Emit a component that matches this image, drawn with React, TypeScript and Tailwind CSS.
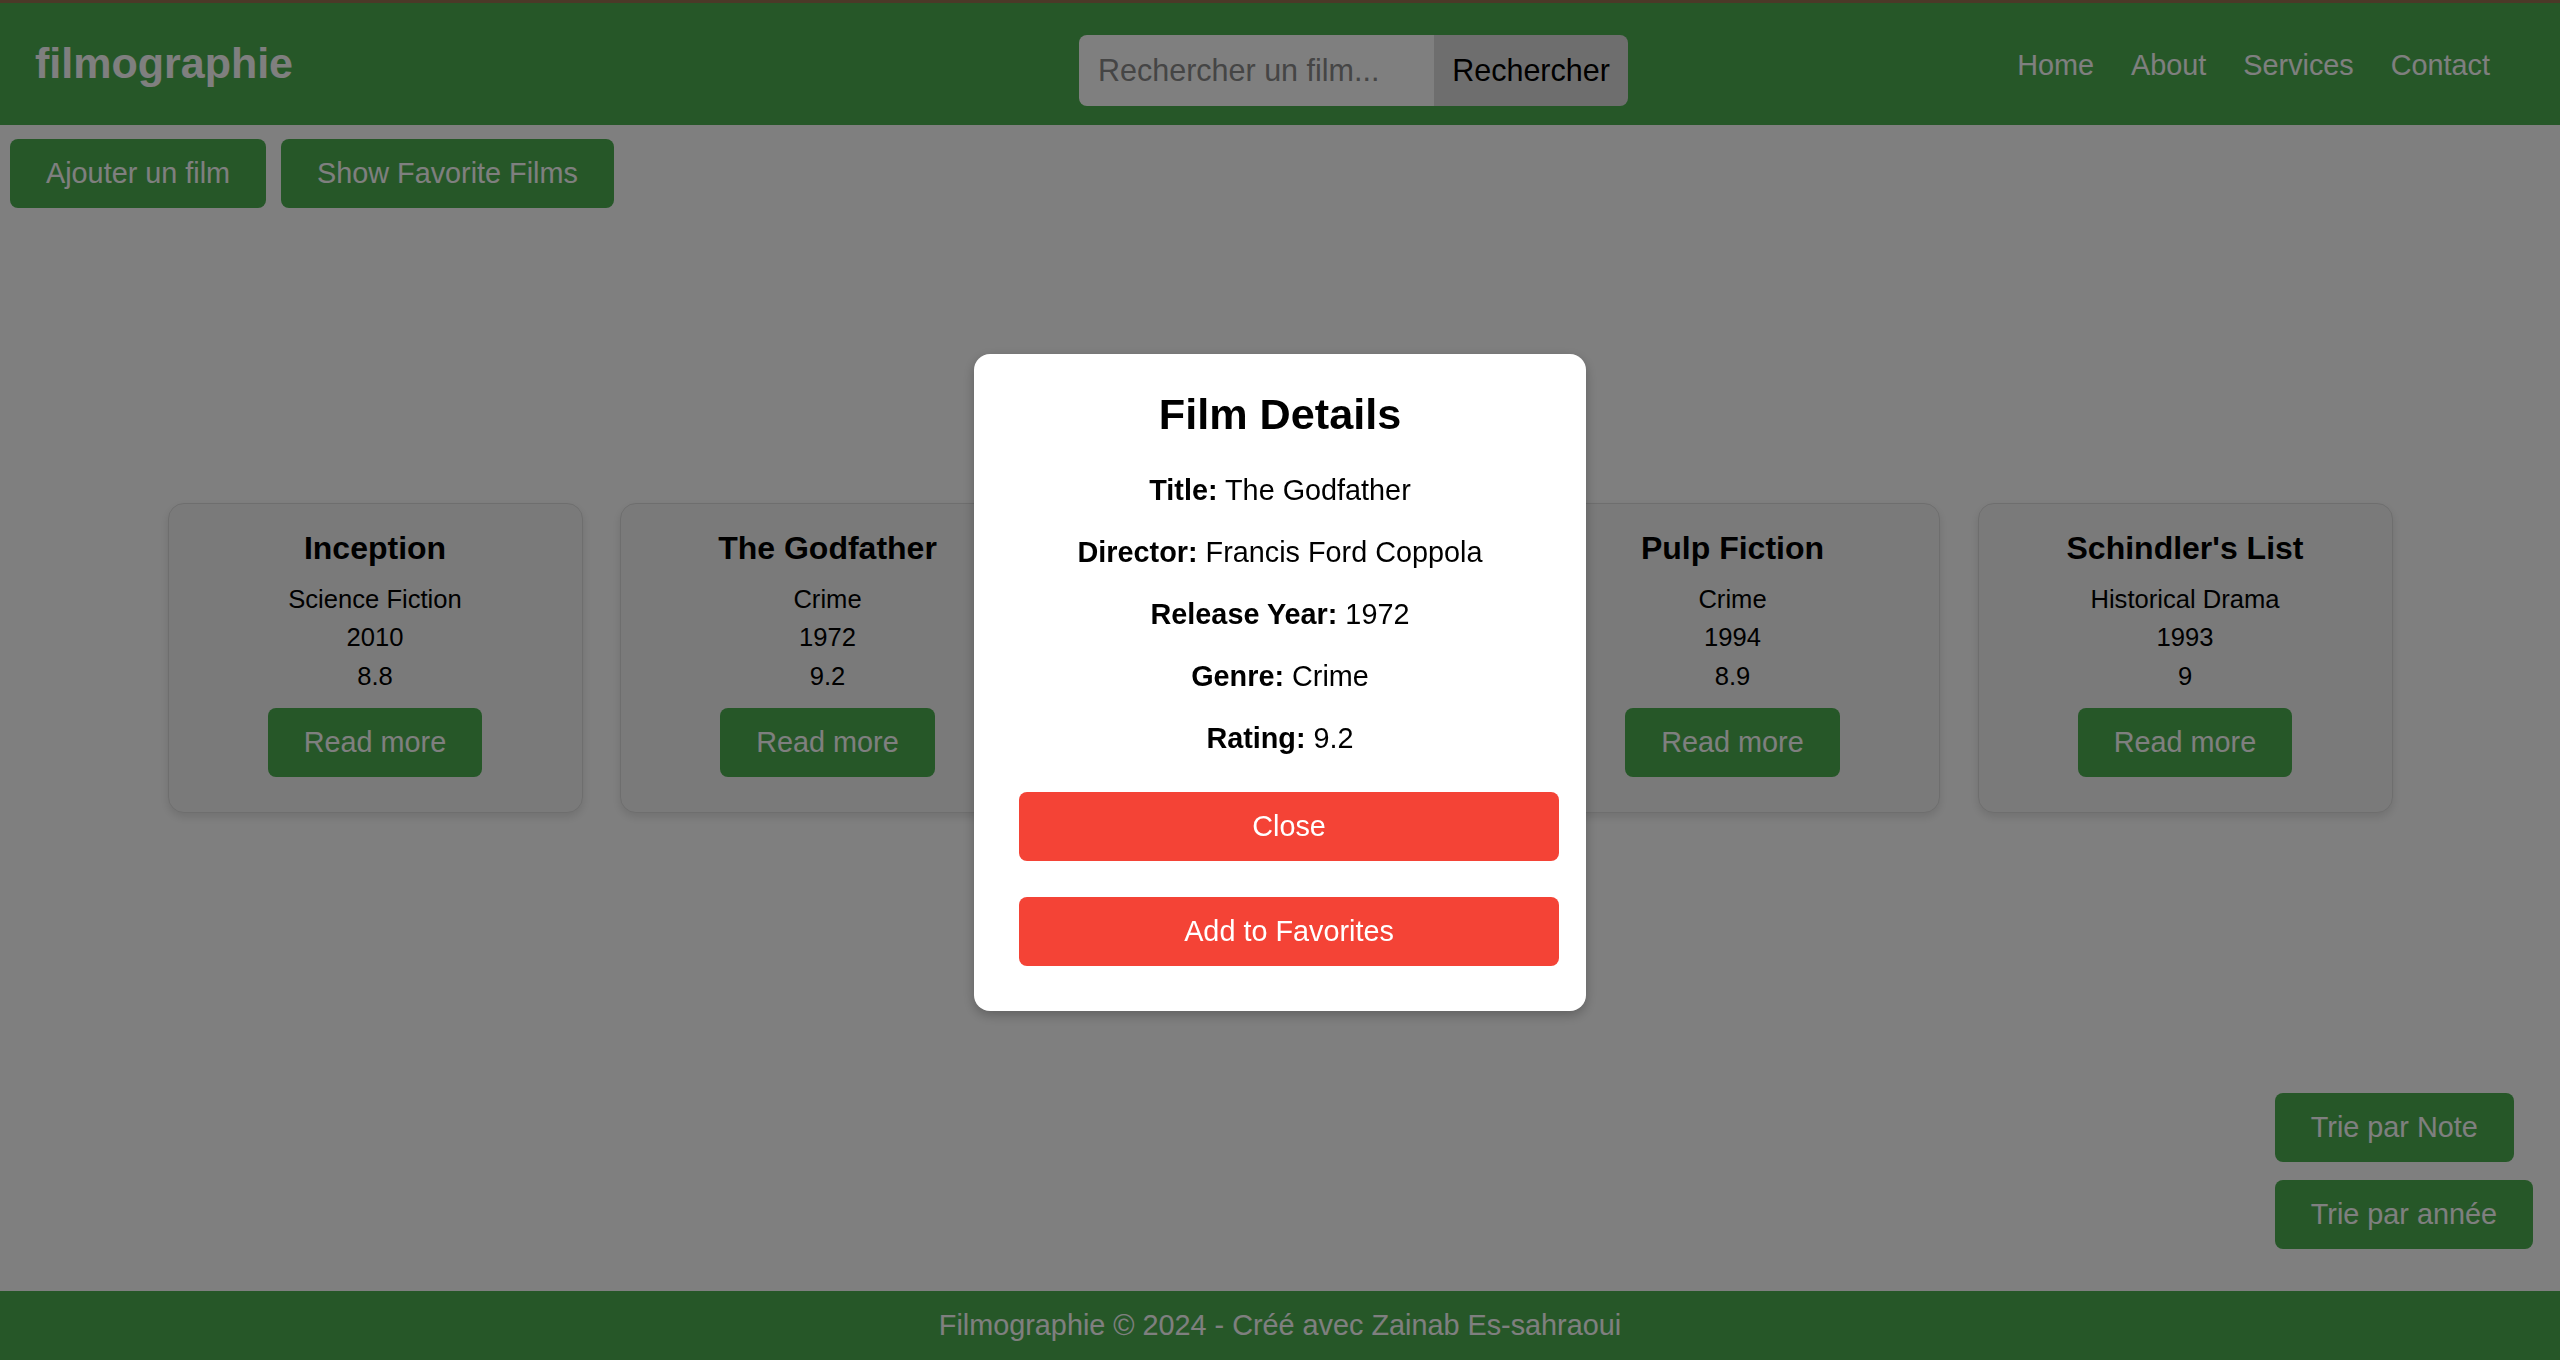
import React from "react";

const films = [
  { title: "Inception", genre: "Science Fiction", year: "2010", rating: "8.8" },
  { title: "The Godfather", genre: "Crime", year: "1972", rating: "9.2" },
  { title: "The Dark Knight", genre: "Action", year: "2008", rating: "9" },
  { title: "Pulp Fiction", genre: "Crime", year: "1994", rating: "8.9" },
  { title: "Schindler's List", genre: "Historical Drama", year: "1993", rating: "9" },
];

function GreenButton({ children }: { children: React.ReactNode }) {
  return (
    <button className="bg-[#4caf50] text-white text-[28.8px] leading-[33px] px-[36px] py-[18px] rounded-[8px] whitespace-nowrap">
      {children}
    </button>
  );
}

function FilmCard({ f }: { f: (typeof films)[number] }) {
  return (
    <div className="w-[415px] h-[310px] shrink-0 bg-[#f5f5f5] border border-[#dddddd] rounded-[16px] shadow-[0_4px_10px_rgba(0,0,0,0.12)] flex flex-col items-center pt-[26px] pb-[36px]">
      <h3 className="text-[32px] leading-[37px] font-bold text-black whitespace-nowrap">{f.title}</h3>
      <div className="mt-[13px] flex flex-col items-center text-[25.6px] leading-[38.4px] text-black">
        <p>{f.genre}</p>
        <p>{f.year}</p>
        <p>{f.rating}</p>
      </div>
      <div className="mt-[13px]">
        <GreenButton>Read more</GreenButton>
      </div>
    </div>
  );
}

export default function App() {
  return (
    <div
      className="relative h-[1360px] w-full flex flex-col bg-white overflow-hidden"
      style={{ fontFamily: '"Liberation Sans", Arial, Helvetica, sans-serif' }}
    >
      <div className="h-[3px] bg-[#967250]" />
      <header className="h-[122px] bg-[#4caf50] flex items-center pl-[35px] pr-[70px]">
        <div className="text-white text-[43px] font-bold leading-none pb-[2px]">filmographie</div>
        <form className="ml-[786px] mt-[13px] flex h-[71px]" onSubmit={(e) => e.preventDefault()}>
          <input
            className="w-[355px] h-full bg-white rounded-l-[8px] pl-[19px] text-[30.5px] text-black placeholder:text-[#8a8a8a] outline-none"
            placeholder="Rechercher un film..."
          />
          <button className="w-[194px] h-full bg-[#dddddd] rounded-r-[8px] text-black text-[30.5px]">
            Rechercher
          </button>
        </form>
        <nav className="ml-auto flex items-center gap-[37px] text-white text-[28.8px] mt-[3px]">
          <a>Home</a>
          <a>About</a>
          <a>Services</a>
          <a>Contact</a>
        </nav>
      </header>

      <main className="flex-1 flex flex-col">
        <div className="flex gap-[15px] mt-[14px] ml-[10px]">
          <GreenButton>Ajouter un film</GreenButton>
          <GreenButton>Show Favorite Films</GreenButton>
        </div>
        <div className="flex justify-center gap-[37.5px] mt-[295px]">
          {films.map((f) => (
            <FilmCard key={f.title} f={f} />
          ))}
        </div>
        <div className="flex-1" />
        <div className="self-end mr-[27px] mb-[42px] flex flex-col items-start gap-[18px]">
          <GreenButton>Trie par Note</GreenButton>
          <GreenButton>Trie par année</GreenButton>
        </div>
      </main>

      <footer className="h-[69px] bg-[#4caf50] flex items-center justify-center text-white text-[28.8px]">
        Filmographie © 2024 - Créé avec Zainab Es-sahraoui
      </footer>

      <div className="fixed inset-0 bg-black/50 flex items-center justify-center">
        <div className="mt-[5px] w-[612px] bg-white rounded-[16px] shadow-[0_4px_12px_rgba(0,0,0,0.25)] flex flex-col items-center pt-[36px] pb-[45px] px-[45px] text-black text-[28.8px] leading-[33.1px]">
          <h2 className="text-[43.2px] leading-[49.6px] font-bold">Film Details</h2>
          <div className="mt-[34.5px] flex flex-col items-center gap-[28.8px]">
            <p><b>Title:</b> The Godfather</p>
            <p><b>Director:</b> Francis Ford Coppola</p>
            <p><b>Release Year:</b> 1972</p>
            <p><b>Genre:</b> Crime</p>
            <p><b>Rating:</b> 9.2</p>
          </div>
          <button className="self-start shrink-0 w-[540px] h-[69px] mt-[36.5px] bg-[#f44336] text-white rounded-[8px] text-[28.8px]">
            Close
          </button>
          <button className="self-start shrink-0 w-[540px] h-[69px] mt-[36px] bg-[#f44336] text-white rounded-[8px] text-[28.8px]">
            Add to Favorites
          </button>
        </div>
      </div>
    </div>
  );
}
